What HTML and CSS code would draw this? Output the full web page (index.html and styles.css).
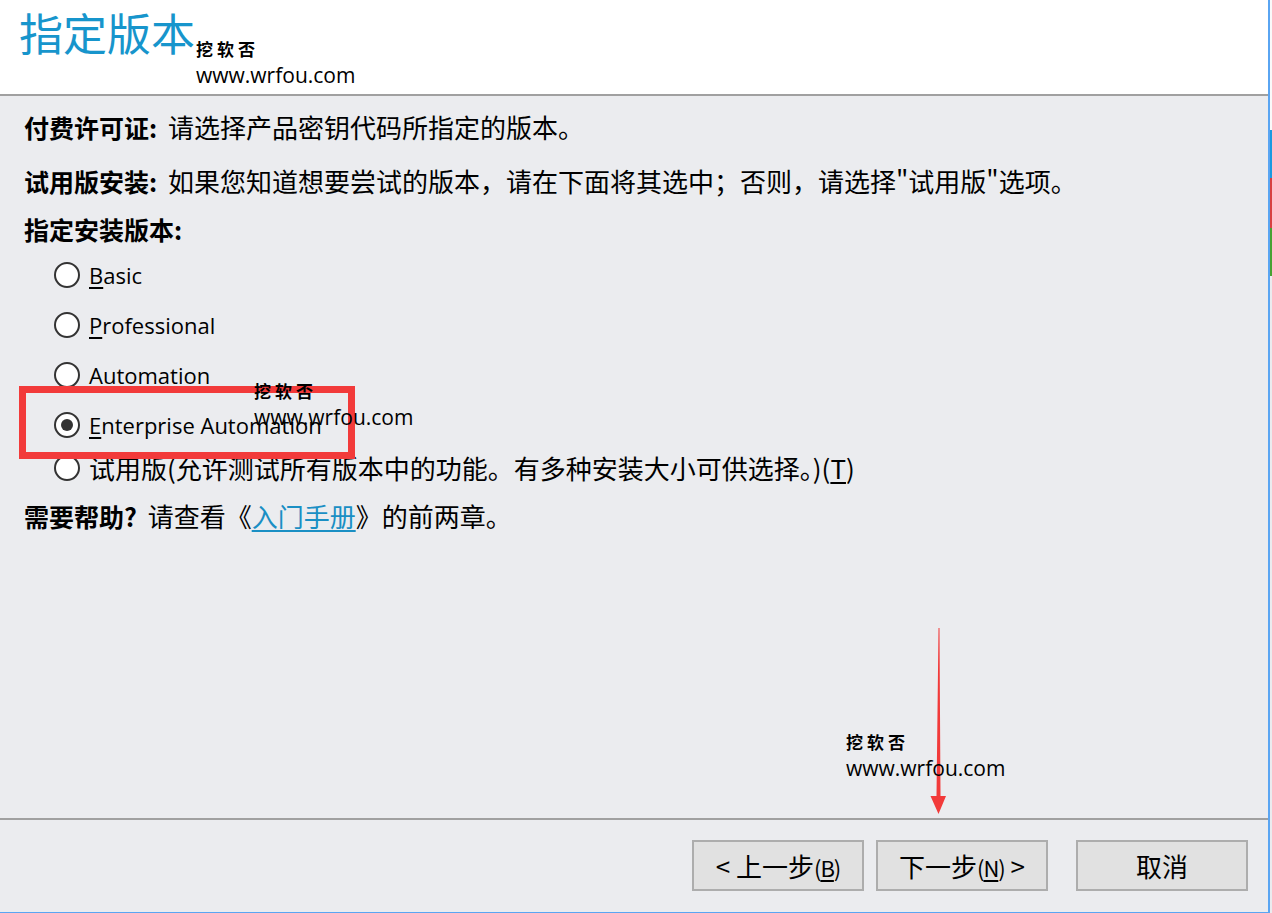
FILE: index.html
```html
<!DOCTYPE html>
<html lang="zh-CN">

<head>
	<meta charset="UTF-8">
	<title>指定版本</title>
	<link rel="stylesheet" href="styles.css">
</head>

<body>
	<div id="dialog">
		<div id="header">
			<h1>指定版本</h1>
		</div>

		<div id="content">
			<p class="line first"><b>付费许可证:</b> 请选择产品密钥代码所指定的版本。</p>
			<p class="line second"><b>试用版安装:</b> 如果您知道想要尝试的版本，请在下面将其选中；否则，请选择"试用版"选项。</p>
			<p class="line third"><b>指定安装版本:</b></p>

			<div id="editions">
				<label class="row"><span class="radio"></span><span class="lbl"><u>B</u>asic</span></label>
				<label class="row"><span class="radio"></span><span class="lbl"><u>P</u>rofessional</span></label>
				<label class="row"><span class="radio"></span><span class="lbl">Automation</span></label>
				<label class="row"><span class="radio checked"></span><span class="lbl"><u>E</u>nterprise Automation</span></label>
				<label class="row trial"><span class="radio"></span><span class="cjk">试用版(允许测试所有版本中的功能。有多种安装大小可供选择。)(<u>T</u>)</span></label>
			</div>

			<p class="line help"><b>需要帮助?</b> 请查看《<a href="#">入门手册</a>》的前两章。</p>
		</div>

		<div id="footer">
			<button class="back">&lt; 上一步<span class="key">(<u>B</u>)</span></button>
			<button class="next">下一步<span class="key">(<u>N</u>)</span> &gt;</button>
			<button class="cancel">取消</button>
		</div>

		<!-- things drawn over the dialog -->
		<div class="highlight"></div>
		<svg class="arrow" width="20" height="188" viewBox="0 0 20 188">
			<polygon points="10.5,0 11.5,0 12.5,168 18,168 10.5,186 2.5,168 8.5,168" fill="#f23a3a" />
		</svg>

		<div class="mark m1"><span class="cn">挖软否</span><span class="url">www.wrfou.com</span></div>
		<div class="mark m2"><span class="cn">挖软否</span><span class="url">www.wrfou.com</span></div>
		<div class="mark m3"><span class="cn">挖软否</span><span class="url">www.wrfou.com</span></div>
	</div>
	<div id="edge">
		<span class="e-top"></span>
		<span class="e-blue"></span>
		<span class="e-red"></span>
		<span class="e-green"></span>
		<span class="e-rest"></span>
	</div>
</body>

</html>
```

FILE: styles.css
```css
body {
	margin: 0;
	padding: 0;
	display: flex;
	width: 1272px;
	height: 913px;
	overflow: hidden;
	background-color: #ebecef;
	font-family: "Noto Sans CJK SC", "Noto Sans", sans-serif;
	color: #000;
}

#dialog {
	position: relative;
	width: 1268px;
	height: 912px;
	border-right: 2px solid #5aa5f2;
	border-bottom: 1px solid #5aa5f2;
	display: flex;
	flex-direction: column;
	background-color: #ebecef;
}

#header {
	height: 94px;
	background-color: #fff;
	border-bottom: 2px solid #a0a0a0;
	flex-shrink: 0;
}

#header h1 {
	margin: 0;
	padding: 2px 0 0 19px;
	font-size: 44px;
	line-height: 60px;
	font-weight: normal;
	color: #1795cc;
}

#content {
	flex: 1;
	border-bottom: 2px solid #a0a0a0;
	padding: 16px 0 0 24px;
	font-size: 26px;
}

.line {
	margin: 0;
	height: 30px;
	line-height: 30px;
	white-space: nowrap;
	word-spacing: 5px;
}

.line b {
	font-weight: bold;
	font-size: 25px;
}

.second {
	margin-top: 24px;
}

.third {
	margin-top: 18px;
}

#editions {
	display: flex;
	flex-direction: column;
	margin-top: 6px;
	padding-left: 30px;
}

.row {
	display: flex;
	align-items: center;
	height: 50px;
	gap: 9px;
}

.row.trial {
	height: 36px;
}

.radio {
	width: 22px;
	height: 22px;
	border: 2px solid #333;
	border-radius: 50%;
	background-color: #fff;
	display: flex;
	align-items: center;
	justify-content: center;
	flex-shrink: 0;
}

.radio.checked::after {
	content: "";
	width: 12px;
	height: 12px;
	border-radius: 50%;
	background-color: #333;
}

.lbl {
	font-family: "Open Sans", "Noto Sans", sans-serif;
	font-size: 22px;
	line-height: 30px;
}

.cjk {
	line-height: 30px;
}

u {
	text-underline-offset: 3px;
}

.help {
	margin-top: 15px;
}

.help a {
	color: #1a8fc4;
	text-decoration: underline;
	text-underline-offset: 3px;
}

#footer {
	height: 92px;
	flex-shrink: 0;
	display: flex;
	justify-content: flex-end;
	align-items: flex-start;
	padding: 20px 20px 0 0;
	box-sizing: border-box;
}

#footer button {
	width: 172px;
	height: 51px;
	background-color: #e1e1e1;
	border: 2px solid #adadad;
	font-family: "Noto Sans CJK SC", sans-serif;
	font-size: 26px;
	color: #000;
	padding: 0;
}

#footer .key {
	font-size: 22px;
	letter-spacing: -1px;
}

#footer .next {
	margin-left: 12px;
}

#footer .cancel {
	margin-left: 28px;
}

.highlight {
	position: absolute;
	left: 19px;
	top: 386px;
	width: 322px;
	height: 59px;
	border: 7px solid #f23a3a;
}

.arrow {
	position: absolute;
	left: 928px;
	top: 628px;
}

.mark {
	position: absolute;
	display: flex;
	flex-direction: column;
	color: #000;
}

.mark .cn {
	font-family: "Noto Sans CJK SC", serif;
	font-weight: bold;
	font-size: 17px;
	line-height: 22px;
	letter-spacing: 4px;
}

.mark .url {
	font-family: "Open Sans", sans-serif;
	font-size: 21px;
	line-height: 30px;
}

.m1 {
	left: 196px;
	top: 38px;
}

.m2 {
	left: 254px;
	top: 380px;
}

.m3 {
	left: 846px;
	top: 731px;
}

#edge {
	width: 2px;
	display: flex;
	flex-direction: column;
}

#edge span {
	display: block;
}

.e-top {
	height: 130px;
	background-color: #fafafa;
}

.e-blue {
	height: 48px;
	background-color: #1a9ae0;
}

.e-red {
	height: 50px;
	background-color: #d84040;
}

.e-green {
	height: 48px;
	background-color: #46a232;
}

.e-rest {
	flex: 1;
	background-color: #ebecef;
}
```
